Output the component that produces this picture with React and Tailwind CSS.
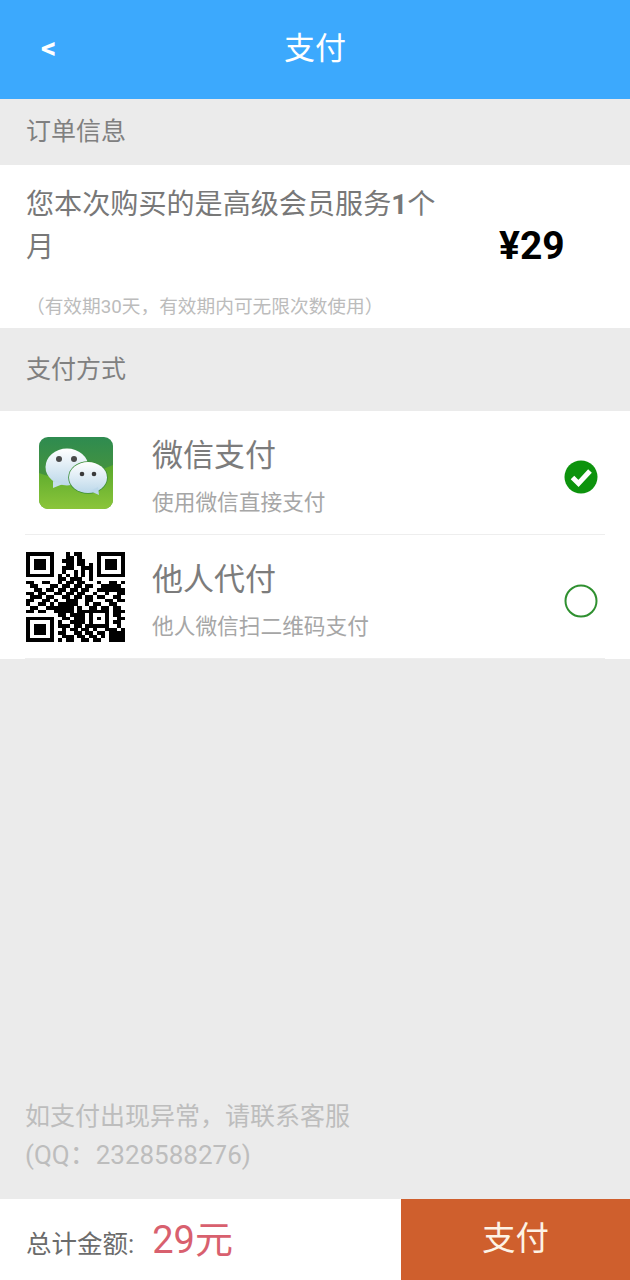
import React from "react";

const QR_ROWS = [
  "1111111000101100001111111",
  "1000001000110100001000001",
  "1011101001110110001011101",
  "1011101000110110101011101",
  "1011101001110011101011101",
  "1000001001001010101000001",
  "1111111010101010101111111",
  "0000000011011100100000000",
  "1100110010110110001001101",
  "0110001101101101100111110",
  "0011011011011011001111111",
  "1101100110110110010010011",
  "0111011001101101101100110",
  "1100110100111001100011011",
  "1001101011111001011001100",
  "0110011111110100110110110",
  "1101100111110111111110111",
  "0000000011011110100010110",
  "1111111001101110101010011",
  "1000001010011110100010110",
  "1011101011101101111110010",
  "1011101001011011010011101",
  "1011101011001101101101111",
  "1000001001110110110101111",
  "1111111010110011011001111",
];

const WechatIcon = () => (
  <svg viewBox="0 0 74 72" className="w-[74px] h-[72px]">
    <defs>
      <linearGradient id="wxTop" x1="0" y1="0" x2="0" y2="1">
        <stop offset="0" stopColor="#2e8b50" />
        <stop offset="0.5" stopColor="#45933f" />
        <stop offset="1" stopColor="#5aa530" />
      </linearGradient>
      <linearGradient id="wxLow" x1="0" y1="0" x2="0" y2="1">
        <stop offset="0" stopColor="#58a82c" />
        <stop offset="1" stopColor="#8bc53a" />
      </linearGradient>
      <linearGradient id="wxBubble" x1="0" y1="0" x2="0" y2="1">
        <stop offset="0" stopColor="#ffffff" />
        <stop offset="1" stopColor="#bcd8ea" />
      </linearGradient>
      <clipPath id="wxClip">
        <rect width="74" height="72" rx="9" />
      </clipPath>
    </defs>
    <g clipPath="url(#wxClip)">
      <rect width="74" height="72" fill="url(#wxTop)" />
      <path d="M0 36 Q30 48 74 28 L74 72 L0 72 Z" fill="url(#wxLow)" />
    </g>
    <ellipse cx="28" cy="30" rx="21.5" ry="18.5" fill="url(#wxBubble)" />
    <path d="M14 44 L14 51 L24 47 Z" fill="#c6deec" />
    <ellipse cx="49" cy="40.5" rx="19.8" ry="16.3" fill="#3f8f3a" />
    <ellipse cx="49" cy="40.5" rx="19" ry="15.5" fill="url(#wxBubble)" />
    <path d="M51 54 L60 58 L59 50 Z" fill="#bcd8ea" />
    <circle cx="20" cy="22" r="3" fill="#4a4a4a" />
    <circle cx="35" cy="22" r="3" fill="#4a4a4a" />
    <circle cx="43" cy="37" r="2.3" fill="#3a3a3a" />
    <circle cx="55" cy="37" r="2.3" fill="#3a3a3a" />
  </svg>
);

const QrCode = () => (
  <svg viewBox="0 0 25 25" preserveAspectRatio="none" shapeRendering="crispEdges" className="w-[99px] h-[90px]">
    {QR_ROWS.map((row, y) =>
      row.split("").map((cell, x) =>
        cell === "1" ? <rect key={`${x}-${y}`} x={x} y={y} width="1.02" height="1.02" fill="#000" /> : null
      )
    )}
  </svg>
);

const Checked = () => (
  <svg viewBox="0 0 34 34" className="w-[34px] h-[34px]">
    <circle cx="17" cy="17" r="16.5" fill="#0d930d" />
    <path d="M8.5 17.5 L14.5 23.5 L26 11" fill="none" stroke="#fff" strokeWidth="5" />
  </svg>
);

const Unchecked = () => (
  <svg viewBox="0 0 34 34" className="w-[34px] h-[34px]">
    <circle cx="17" cy="17" r="15.5" fill="none" stroke="#2f9030" strokeWidth="2" />
  </svg>
);

const PayOption = ({ icon, title, desc, mark }) => (
  <div className="relative flex items-center h-[124px]">
    <div className="w-[152px] pl-[26px] shrink-0">{icon}</div>
    <div className="flex-1 pt-[7px]">
      <div className="text-[31px] leading-[44px] text-[#7c7c7c]">{title}</div>
      <div className="mt-[9px] text-[21.7px] leading-[32px] text-[#a6a6a6]">{desc}</div>
    </div>
    <div className="pr-[32px] pt-[8px]">{mark}</div>
    <div className="absolute left-[25px] right-[25px] bottom-0 h-px bg-[#eeeeee]" />
  </div>
);

export default function App() {
  return (
    <div className="h-[1280px] flex flex-col bg-[#ebebeb] font-['Roboto','Noto_Sans_CJK_SC',sans-serif] overflow-hidden">
      {/* Header */}
      <div className="relative h-[99px] shrink-0 flex items-center justify-center bg-[#3ca9fd] text-white">
        <span className="absolute left-[41px] top-[29px] text-[30px] leading-[38px] font-bold">&lt;</span>
        <span className="text-[31px]">支付</span>
      </div>

      {/* Order info */}
      <div className="h-[66px] shrink-0 flex items-center px-[26px] text-[25px] text-[#808080]">订单信息</div>
      <div className="relative h-[163px] shrink-0 bg-white px-[26px] pt-[18px]">
        <div className="w-[412px] text-[28.1px] leading-[43px] text-[#787878]">
          您本次购买的是高级会员服务<span className="font-bold">1</span>个月
        </div>
        <div className="mt-[24px] text-[18.7px] leading-[28px] text-[#bcbcbc]">（有效期30天，有效期内可无限次数使用）</div>
        <div className="absolute left-[499px] top-[58px] text-[39px] leading-[46px] font-bold text-black">¥29</div>
      </div>

      {/* Pay method */}
      <div className="h-[83px] shrink-0 flex items-center px-[26px] text-[25px] text-[#808080]">支付方式</div>
      <div className="shrink-0 bg-white">
        <PayOption
          icon={<div className="pl-[13px]"><WechatIcon /></div>}
          title="微信支付"
          desc="使用微信直接支付"
          mark={<Checked />}
        />
        <PayOption icon={<QrCode />} title="他人代付" desc="他人微信扫二维码支付" mark={<Unchecked />} />
      </div>

      {/* Notice */}
      <div className="mt-auto px-[25px] pb-[24px] text-[25px] leading-[39px] text-[#bdbdbd]">
        <div>如支付出现异常，请联系客服</div>
        <div className="text-[26px]">(QQ：2328588276)</div>
      </div>

      {/* Footer */}
      <div className="h-[81px] shrink-0 flex bg-white">
        <div className="flex-1 flex items-center pl-[26px]">
          <span className="pt-[9px] text-[25.5px] text-[#6b6b6b]">总计金额:</span>
          <span className="ml-[18px] pt-[2px] text-[38px] text-[#d8606e]">29元</span>
        </div>
        <div className="w-[229px] flex items-center justify-center bg-[#cf5f2d] text-[33.5px] text-[#fdf3e6]">支付</div>
      </div>
    </div>
  );
}
